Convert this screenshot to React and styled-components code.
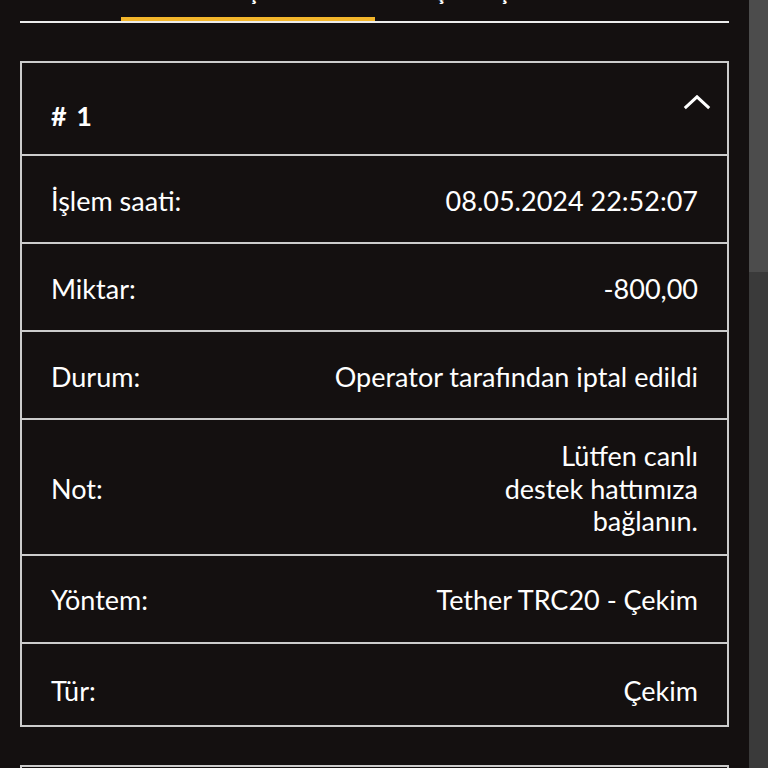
import React from 'react';
import styled, { createGlobalStyle } from 'styled-components';

const GlobalStyle = createGlobalStyle`
  html, body {
    margin: 0;
    padding: 0;
    background: #141010;
    overflow: hidden;
    font-family: 'Lato', 'Noto Sans', sans-serif;
  }
`;

const Shell = styled.div`
  display: flex;
  height: 100vh;
  overflow: hidden;
  background: #141010;
`;

const Main = styled.div`
  flex: 1;
  min-width: 0;
  overflow: hidden;
`;

const Rail = styled.div`
  width: 19px;
  flex-shrink: 0;
  background: #3a3a3a;
`;

const Thumb = styled.div`
  height: 272px;
  background: #4c4c4c;
`;

const Page = styled.div`
  padding: 0 20px 35px;
`;

const Tabs = styled.div`
  display: flex;
  justify-content: center;
  margin-top: -20px;
  border-bottom: 2px solid #ececec;
`;

const Tab = styled.div`
  width: 254px;
  text-align: center;
  font-size: 20px;
  line-height: 24px;
  font-weight: 700;
  color: #ffffff;
  padding-bottom: 13px;
  border-bottom: 4px solid ${({ $active }) => ($active ? '#f3b62b' : 'transparent')};
`;

const Card = styled.div`
  margin-top: 38px;
  border: 2px solid #cccccc;
  color: #ffffff;
  font-size: 27px;
  line-height: 1.2;
`;

const Header = styled.div`
  display: flex;
  justify-content: space-between;
  align-items: flex-start;
  padding: 37px 16px 22px 29px;
`;

const Title = styled.div`
  font-weight: 700;
  word-spacing: 3px;
`;

const Chevron = styled.svg`
  margin-top: -5px;
  flex-shrink: 0;
`;

const Row = styled.div`
  display: flex;
  justify-content: space-between;
  align-items: center;
  box-sizing: border-box;
  min-height: 88px;
  padding: 20px 29px 16px;
  border-top: 2px solid #cccccc;

  &:last-child {
    min-height: 83px;
    padding-top: 30px;
    padding-bottom: 16px;
  }
`;

const Label = styled.span`
  white-space: nowrap;
`;

const Value = styled.span`
  text-align: right;
  max-width: ${({ $narrow }) => ($narrow ? '215px' : 'none')};
`;

const records = [
  {
    id: 1,
    rows: [
      ['İşlem saati:', '08.05.2024 22:52:07'],
      ['Miktar:', '-800,00'],
      ['Durum:', 'Operator tarafından iptal edildi'],
      ['Not:', 'Lütfen canlı destek hattımıza bağlanın.', true],
      ['Yöntem:', 'Tether TRC20 - Çekim'],
      ['Tür:', 'Çekim'],
    ],
  },
  {
    id: 2,
    rows: [
      ['İşlem saati:', '07.05.2024 19:14:33'],
      ['Miktar:', '-1.200,00'],
      ['Durum:', 'Operator tarafından iptal edildi'],
      ['Not:', 'Lütfen canlı destek hattımıza bağlanın.', true],
      ['Yöntem:', 'Tether TRC20 - Çekim'],
      ['Tür:', 'Çekim'],
    ],
  },
];

const ChevronUp = () => (
  <Chevron width="28" height="15" viewBox="0 0 28 15">
    <path d="M1.8 13.2 L14 1.8 L26.2 13.2" fill="none" stroke="#ffffff" strokeWidth="3" />
  </Chevron>
);

export default function App() {
  return (
    <>
      <GlobalStyle />
      <Shell>
        <Main>
          <Page>
            <Tabs>
              <Tab $active>Yatırım İşlemleri</Tab>
              <Tab>Çekim İşlemleri</Tab>
            </Tabs>
            {records.map((rec) => (
              <Card key={rec.id}>
                <Header>
                  <Title># {rec.id}</Title>
                  <ChevronUp />
                </Header>
                {rec.rows.map(([label, value, narrow]) => (
                  <Row key={label}>
                    <Label>{label}</Label>
                    <Value $narrow={narrow}>{value}</Value>
                  </Row>
                ))}
              </Card>
            ))}
          </Page>
        </Main>
        <Rail>
          <Thumb />
        </Rail>
      </Shell>
    </>
  );
}
